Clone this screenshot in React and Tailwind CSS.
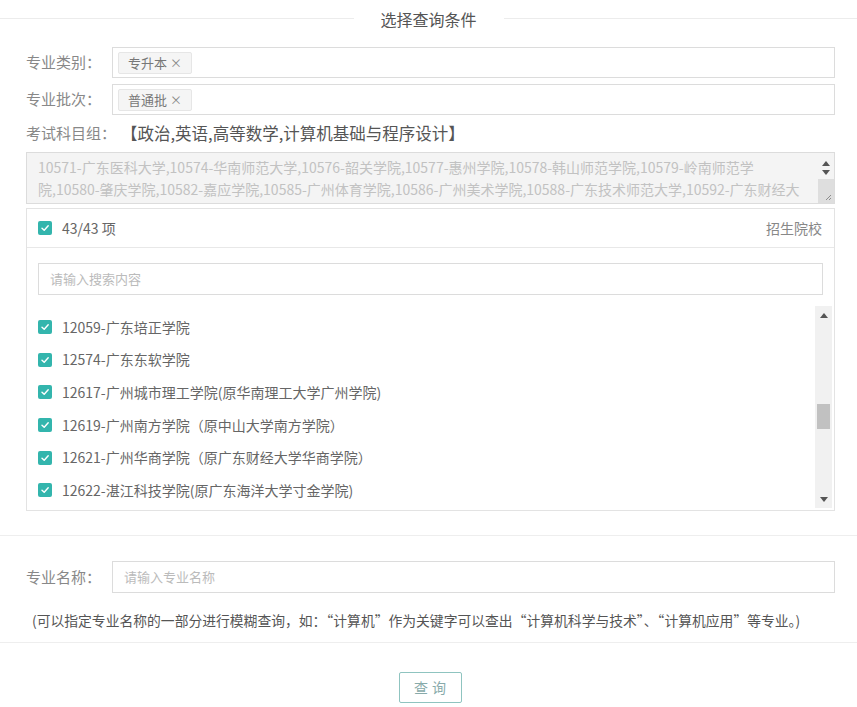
import React from "react";

const Check = () => (
  <span className="w-[14px] h-[14px] rounded-[2px] bg-[#33b5ad] flex items-center justify-center shrink-0">
    <svg width="10" height="10" viewBox="0 0 10 10" fill="none">
      <path d="M2 5.2 L4.2 7.3 L8.2 2.8" stroke="white" strokeWidth="1.4" strokeLinecap="round" strokeLinejoin="round" />
    </svg>
  </span>
);

const Tag = ({ children }) => (
  <span className="h-[22px] px-[9px] bg-[#f5f5f5] border border-[#e6e6e6] rounded-[2px] text-[13px] text-[#777] flex items-center gap-[3px]">
    {children}
    <span className="text-[12px] text-[#888]">×</span>
  </span>
);

const items = [
  "12059-广东培正学院",
  "12574-广东东软学院",
  "12617-广州城市理工学院(原华南理工大学广州学院)",
  "12619-广州南方学院（原中山大学南方学院）",
  "12621-广州华商学院（原广东财经大学华商学院）",
  "12622-湛江科技学院(原广东海洋大学寸金学院)",
];

const Up = () => (
  <svg width="8" height="5" viewBox="0 0 8 5"><path d="M0 5 L4 0 L8 5 Z" fill="#555" /></svg>
);
const Down = () => (
  <svg width="8" height="5" viewBox="0 0 8 5"><path d="M0 0 L4 5 L8 0 Z" fill="#555" /></svg>
);

export default function App() {
  return (
    <div className="w-[857px] h-[707px] bg-white overflow-hidden text-[#777] font-['Noto_Sans_CJK_SC',sans-serif]">
      {/* title */}
      <div className="flex items-center h-[37px]">
        <div className="flex-1 h-px bg-[#ececec]" />
        <div className="px-[27px] text-[16px] text-[#555]">选择查询条件</div>
        <div className="flex-1 h-px bg-[#ececec]" />
      </div>

      <div className="pl-[26px] pr-[22px] pt-[10px] flex flex-col">
        <div className="flex items-center h-[31px]">
          <div className="w-[86px] text-[15px] text-[#888] whitespace-nowrap">专业类别：</div>
          <div className="flex-1 h-[31px] border border-[#dcdcdc] flex items-center px-[5px]">
            <Tag>专升本</Tag>
          </div>
        </div>
        <div className="flex items-center h-[31px] mt-[6px]">
          <div className="w-[86px] text-[15px] text-[#888] whitespace-nowrap">专业批次：</div>
          <div className="flex-1 h-[31px] border border-[#dcdcdc] flex items-center px-[5px]">
            <Tag>普通批</Tag>
          </div>
        </div>
        <div className="flex items-center h-[32px] mt-[2px] whitespace-nowrap">
          <span className="text-[#888] text-[15px] w-[95px]">考试科目组：</span>
          <span className="text-[#555] text-[16.5px]">【政治,英语,高等数学,计算机基础与程序设计】</span>
        </div>

        {/* textarea */}
        <div className="mt-[3px] h-[52px] bg-[#f4f4f4] border border-[#dcdcdc] flex">
          <div className="flex-1 pl-[11px] pr-[6px] pt-[3px] text-[14px] leading-[22px] text-[#c2c2c2] overflow-hidden whitespace-nowrap">
            <div>10571-广东医科大学,10574-华南师范大学,10576-韶关学院,10577-惠州学院,10578-韩山师范学院,10579-岭南师范学</div>
            <div>院,10580-肇庆学院,10582-嘉应学院,10585-广州体育学院,10586-广州美术学院,10588-广东技术师范大学,10592-广东财经大</div>
          </div>
          <div className="w-[16px] flex flex-col items-center">
            <div className="h-[13px] flex items-end justify-center"><Up /></div>
            <div className="h-[13px] flex items-center justify-center"><Down /></div>
            <div className="flex-1 w-full bg-[#dedede] flex items-end justify-end p-[2px]">
              <svg width="8" height="8" viewBox="0 0 8 8"><path d="M7 2 L2 7 M7 5 L5 7" stroke="#777" strokeWidth="0.8" /></svg>
            </div>
          </div>
        </div>

        {/* transfer panel */}
        <div className="mt-[4px] h-[303px] border border-[#e3e3e3] flex flex-col">
          <div className="h-[39px] border-b border-[#e8e8e8] flex items-center pl-[11px] pr-[12px]">
            <Check />
            <span className="ml-[10px] text-[14px] text-[#666]">43/43 项</span>
            <span className="ml-auto text-[14px] text-[#888]">招生院校</span>
          </div>
          <div className="px-[11px] pt-[15px]">
            <div className="h-[32px] border border-[#dcdcdc] flex items-center px-[11px] text-[13px] text-[#bbb]">请输入搜索内容</div>
          </div>
          <div className="flex-1 flex mt-[11px] overflow-hidden">
            <div className="flex-1 pl-[11px] pt-[5px] flex flex-col">
              {items.map((t) => (
                <div key={t} className="h-[32.6px] flex items-center">
                  <Check />
                  <span className="ml-[10px] text-[14px] text-[#666] whitespace-nowrap">{t}</span>
                </div>
              ))}
            </div>
            <div className="w-[17px] mr-[2px] mb-[2px] bg-[#f1f1f1] flex flex-col items-center">
              <div className="h-[18px] flex items-center justify-center"><Up /></div>
              <div className="h-[80px]" />
              <div className="w-[13px] h-[25px] bg-[#c1c1c1]" />
              <div className="flex-1" />
              <div className="h-[18px] flex items-center justify-center"><Down /></div>
            </div>
          </div>
        </div>
      </div>

      <div className="mt-[24px] h-px bg-[#eeeeee]" />

      <div className="pl-[26px] pr-[22px] pt-[25px]">
        <div className="flex items-center h-[32px]">
          <div className="w-[86px] text-[15px] text-[#888] whitespace-nowrap">专业名称：</div>
          <div className="flex-1 h-[32px] border border-[#dcdcdc] flex items-center px-[11px] text-[13px] text-[#bbb]">请输入专业名称</div>
        </div>
        <div className="mt-[12px] pl-[6px] text-[13.8px] text-[#555] h-[30px] flex items-center whitespace-nowrap">
          (可以指定专业名称的一部分进行模糊查询，如：“计算机”作为关键字可以查出“计算机科学与技术”、“计算机应用”等专业。)
        </div>
      </div>

      <div className="mt-[7px] h-px bg-[#eeeeee]" />

      <div className="flex justify-center pt-[29px] pl-[3px]">
        <button className="w-[63px] h-[31px] border border-[#8fc4c0] rounded-[2px] text-[14px] text-[#8aa] tracking-[4px] pl-[4px] bg-white">查询</button>
      </div>
    </div>
  );
}
